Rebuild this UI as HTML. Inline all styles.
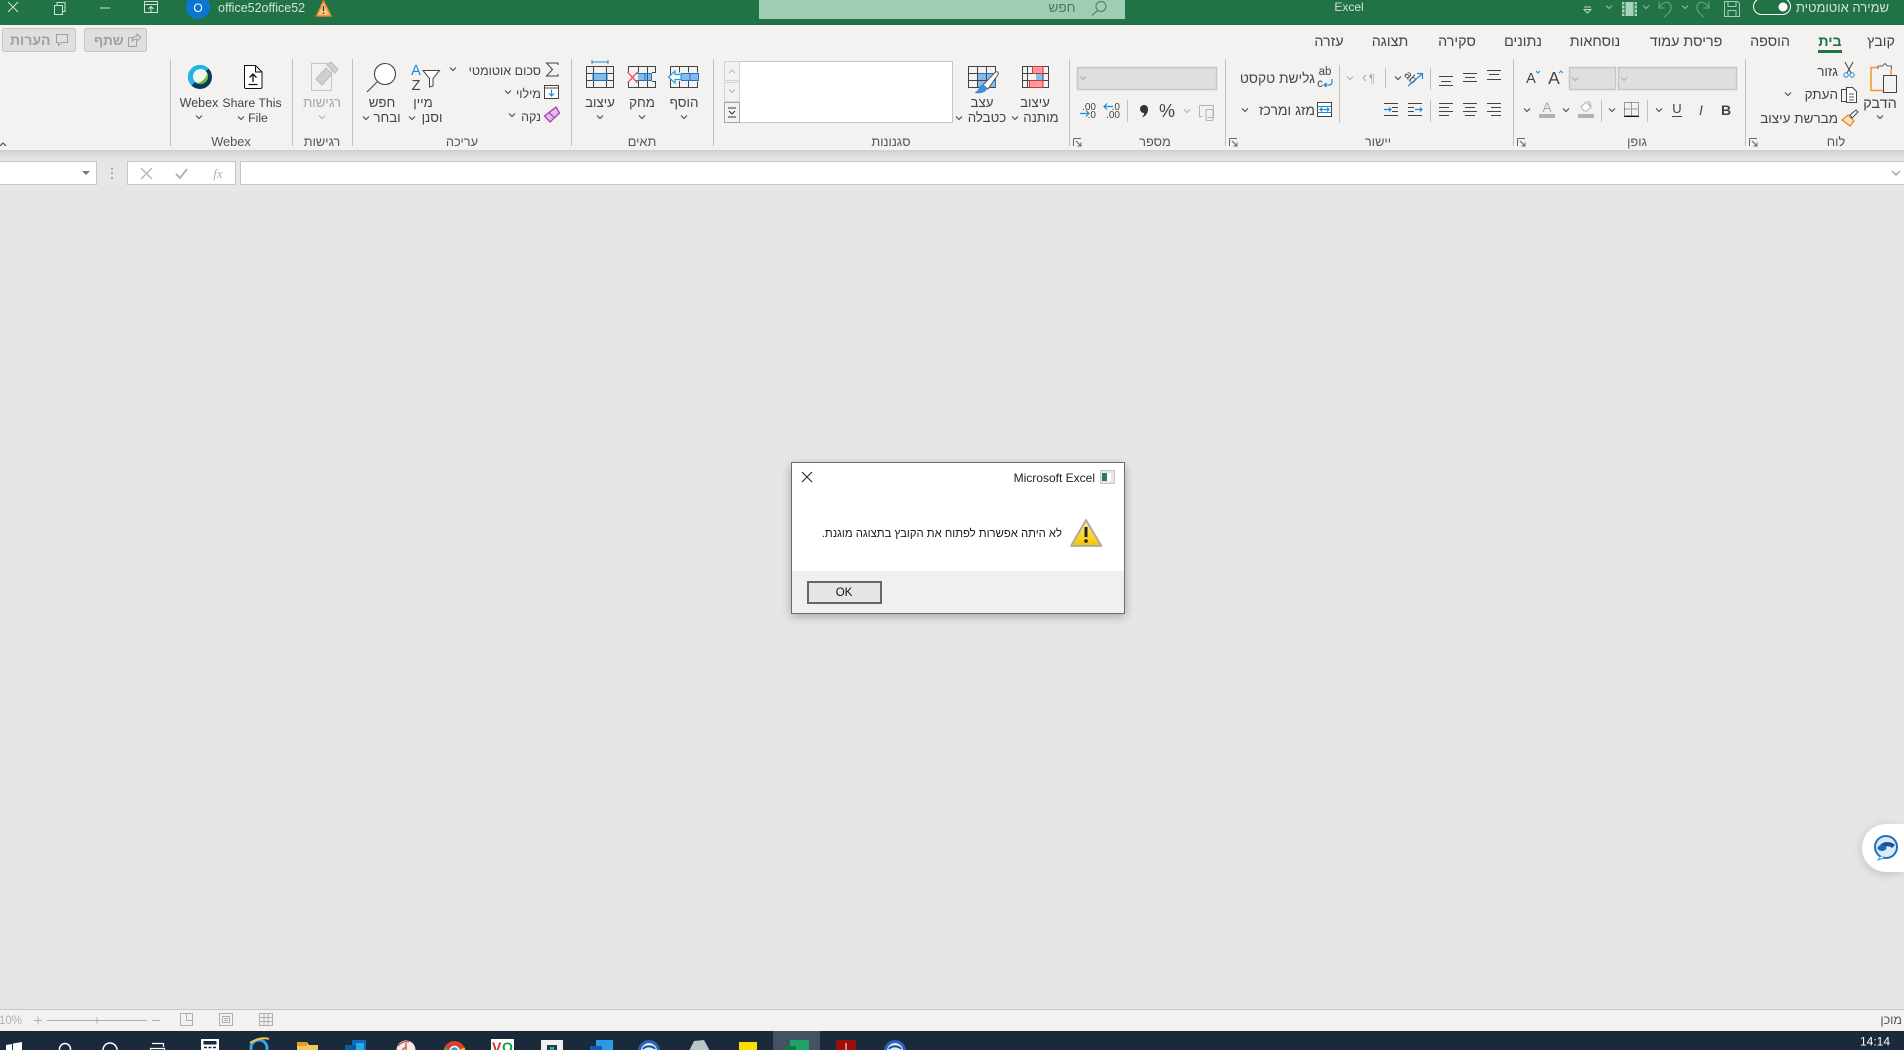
<!DOCTYPE html>
<html lang="he"><head><meta charset="utf-8"><title>Excel</title>
<style>
html,body{margin:0;padding:0;background:#e6e6e6;width:1904px;height:1050px;overflow:hidden}
svg{position:absolute;left:0;top:0;display:block}
text{font-family:"Liberation Sans","Noto Sans CJK SC",sans-serif;font-size:12px;fill:#444}
.h{font-size:13.3px}
.s{font-size:12.5px}
.m{text-anchor:middle}
.e{text-anchor:end}
.tab{font-size:14.300px;text-anchor:middle;fill:#444}
.lab{font-size:12.800px;text-anchor:middle;fill:#555}
.w{fill:#d2e3d9}
.gr{fill:#a8a6a4}
.ln{stroke:#444;stroke-width:1;fill:none}
.bl{stroke:#1f8ad6;stroke-width:1.2;fill:none}
.sep{stroke:#c4c2c0;stroke-width:1}
.cb{fill:#e1dfdd;stroke:#c8c6c4;stroke-width:1.5}
#msg{position:absolute;left:800px;width:262px;top:526px;font:11.3px/16px "Liberation Sans",sans-serif;color:#1a1a1a;text-align:right;direction:rtl;white-space:nowrap}
</style></head><body>
<svg width="1904" height="1050" viewBox="0 0 1904 1050" xmlns="http://www.w3.org/2000/svg">
<defs>
<path id="c" d="M-3-1.500L0 1.500L3-1.500" fill="none" stroke="#444" stroke-width="1"/>
<path id="cg" d="M-3-1.500L0 1.500L3-1.500" fill="none" stroke="#b0aeac" stroke-width="1"/>
<path id="cl" d="M-3-1.500L0 1.500L3-1.500" fill="none" stroke="#8fc0a5" stroke-width="1"/>
<path id="dl" d="M.5.5H8M.5.5V8M3 3L8 8M8 4.500V8H4.500" fill="none" stroke="#666" stroke-width="1"/>
<linearGradient id="sh" x1="0" y1="0" x2="0" y2="1"><stop offset="0" stop-color="#cfcfcf"/><stop offset="1" stop-color="#e6e6e6"/></linearGradient>
<linearGradient id="yw" x1="0" y1="0" x2="0" y2="1"><stop offset="0" stop-color="#fff27a"/><stop offset="1" stop-color="#f5c400"/></linearGradient>
<filter id="ds" x="-20%" y="-40%" width="140%" height="180%"><feGaussianBlur stdDeviation="5"/></filter>
</defs>
<!-- backgrounds -->
<rect width="1904" height="1050" fill="#e6e6e6"/>
<rect width="1904" height="25" fill="#217346"/>
<rect y="25" width="1904" height="125" fill="#f3f2f1"/>
<rect y="150" width="1904" height="9" fill="url(#sh)"/>

<!-- title bar left -->
<path d="M8 2L18 12M18 2L8 12" stroke="#cfe2d7" fill="none"/>
<path d="M54.500 5.500h8v9h-8zM57 5.500V2.500h8v9h-2.500" stroke="#cfe2d7" fill="none"/>
<path d="M100 8h10" stroke="#cfe2d7"/>
<path d="M144.500 1.500h13v11h-13zM144.500 4.500h13M151 12V7M148.500 9L151 6.500L153.500 9" stroke="#cfe2d7" fill="none"/>
<circle cx="198" cy="7" r="12" fill="#0a78d2"/>
<text x="198" y="12" class="m" style="fill:#fff;font-size:12px">O</text>
<text x="218" y="12" class="w" style="font-size:12.500px">office52office52</text>
<path d="M323.500 1L331 16H316.500Z" fill="#f7c57f" stroke="#e8872b" stroke-width="1.500"/><path d="M323.500 6V11M323.500 12.500V14" stroke="#333" stroke-width="1.200"/>

<!-- search -->
<rect x="759" width="366" height="19" fill="#9fcdb3"/>
<text x="1062" y="12" class="m" style="fill:#3f7f5e;font-size:13.500px">חפש</text>
<circle cx="1101" cy="6.500" r="5" fill="none" stroke="#3f7f5e"/><path d="M1097.500 10.500L1092 15.500" stroke="#3f7f5e"/>
<text x="1349" y="11" class="m w" style="font-size:12px">Excel</text>

<!-- QAT -->
<path d="M1584 7h7M1584 9.500L1587.500 13L1591 9.500Z" fill="none" stroke="#bcd6c7"/>
<use href="#cl" x="1609" y="7"/>
<rect x="1622" y="2" width="15" height="14" fill="#a7d3ba"/><path d="M1625 2v14M1634 2v14M1622 5h3M1622 9h3M1622 13h3M1634 5h3M1634 9h3M1634 13h3" stroke="#217346"/>
<use href="#cl" x="1646" y="7"/>
<path d="M1659 1v7h6M1659 8C1664-1 1672 2 1671 8C1671 12 1667 15 1664 17" fill="none" stroke="#5ea17e" stroke-width="1.200"/>
<use href="#cl" x="1685" y="7"/>
<path d="M1709 1v7h-6M1709 8C1704-1 1696 2 1697 8C1697 12 1701 15 1704 17" fill="none" stroke="#5ea17e" stroke-width="1.200"/>
<path d="M1724.500 1.500h13l2 2v13h-15zM1728 1.500v5h8v-5M1728 16.500v-6h8v6" fill="none" stroke="#a4cdb6"/>
<rect x="1753.500" y="-1.500" width="37" height="16" rx="8" fill="#217346" stroke="#fff"/>
<circle cx="1783" cy="7" r="4.500" fill="#fff"/>
<text x="1889" y="12" class="e w" style="font-size:13px">שמירה אוטומטית</text>

<!-- tabs -->
<text x="1881" y="46" class="tab">קובץ</text>
<text x="1830" y="46" class="tab" style="font-weight:bold;fill:#217346">בית</text>
<rect x="1818" y="50" width="24" height="3" fill="#217346"/>
<text x="1770" y="46" class="tab">הוספה</text>
<text x="1686" y="46" class="tab">פריסת עמוד</text>
<text x="1595" y="46" class="tab">נוסחאות</text>
<text x="1523" y="46" class="tab">נתונים</text>
<text x="1457" y="46" class="tab">סקירה</text>
<text x="1390" y="46" class="tab">תצוגה</text>
<text x="1329" y="46" class="tab">עזרה</text>

<!-- share/comments -->
<rect x="2.500" y="28.500" width="73" height="23" rx="2" fill="#e1dfdd" stroke="#c8c6c4"/>
<text x="10" y="45" style="font-weight:bold;fill:#a19f9d;font-size:14px">הערות</text>
<path d="M56.500 34.500h11v8h-6l-3 3v-3h-2z" fill="none" stroke="#a19f9d"/>
<rect x="84.500" y="28.500" width="62" height="23" rx="2" fill="#e1dfdd" stroke="#c8c6c4"/>
<text x="94" y="45" style="font-weight:bold;fill:#a19f9d;font-size:13.500px">שתף</text>
<path d="M128.500 37.500v9h8v-5M128.500 37.500h4M132 41c0-3 2-5 5-5v-2l4 3.500-4 3.500v-2c-2 0-4 1-5 2z" fill="none" stroke="#a19f9d"/>

<!-- separators -->
<path class="sep" d="M170.500 59V146M292.500 59V146M352.500 59V146M571.500 59V146M713.500 59V146M1069.500 59V146M1225.500 59V146M1513.500 59V146M1745.500 59V146"/>
<path d="M0 146L3 143L6 146" fill="none" stroke="#444"/>

<!-- Webex group -->
<circle cx="200" cy="77" r="12" fill="#0b3a52"/>
<path d="M191.500 85.500A12 12 0 0 1 208.500 68.500L204.500 73A6 6 0 0 0 196 81.500Z" fill="#1fb6e8"/>
<circle cx="200.500" cy="76.500" r="7.500" fill="#f4f6f0"/>
<path d="M207.500 73A8 8 0 0 1 196 83C201 83 206 79 207.500 73Z" fill="#66b944"/>
<text x="199" y="107" class="m" style="font-size:12.500px">Webex</text><use href="#c" x="199" y="117"/>
<path d="M244.500 65.500h11l6.500 6.500v15a1.500 1.500 0 0 1-1.500 1.500h-14.500a1.500 1.500 0 0 1-1.500-1.500zM255.500 65.500v6.500h6.500" fill="#fff" stroke="#111" stroke-width="1"/>
<path d="M253 82V74M249.500 77.500L253 74L256.500 77.500M248.500 84.500h9" fill="none" stroke="#111" stroke-width="1.300"/>
<text x="252" y="107" class="m" style="font-size:12.300px">Share This</text><text x="258" y="122" class="m" style="font-size:12.300px">File</text><use href="#c" x="241" y="118"/>
<text x="231" y="146" class="lab">Webex</text>

<!-- Sensitivity -->
<rect x="311.500" y="63.500" width="20" height="27" fill="none" stroke="#c8c6c4"/>
<path d="M316 79l10-11 6 6-10 11zM327 65l4-3 7 7-3 4z" fill="#d2d0ce" stroke="#bdbbb9"/>
<text x="322" y="107" class="m gr h">רגישות</text><use href="#cg" x="322" y="117"/>
<text x="322" y="146" class="lab">רגישות</text>

<!-- Editing -->
<circle cx="385" cy="74" r="10.500" fill="#fff" stroke="#444" stroke-width="1.100"/>
<path d="M377 82L367 92" stroke="#444" stroke-width="1.100"/>
<text x="382" y="107" class="m h">חפש</text><text x="387" y="122" class="m h">ובחר</text><use href="#c" x="366" y="118"/>
<text x="416" y="75" class="m" style="fill:#1f8ad6;font-size:14.500px">A</text>
<text x="416" y="90" class="m" style="fill:#444;font-size:14.500px">Z</text>
<path d="M423 70.500h16.500l-6.500 8v7.500l-3.500 1v-8.500z" fill="#fff" stroke="#444"/>
<text x="423" y="107" class="m h">מיין</text><text x="432" y="122" class="m h">וסנן</text><use href="#c" x="412" y="118"/>
<text x="541" y="75" class="e s">סכום אוטומטי</text><use href="#c" x="453" y="69"/>
<path d="M558 65V63H546.500L552.500 69.500L546.500 76H558V74" fill="none" stroke="#444"/>
<text x="541" y="98" class="e s">מילוי</text><use href="#c" x="508" y="92"/>
<rect x="544.500" y="85.500" width="14" height="13" fill="#fff" stroke="#444"/><path d="M544.500 88h14" stroke="#444"/><path d="M551.500 89.500v6.500M549 93.500L551.500 96L554 93.500" fill="none" stroke="#1f8ad6" stroke-width="1.200"/>
<text x="541" y="121" class="e s">נקה</text><use href="#c" x="512" y="115"/>
<path d="M544.500 116L556 107L559.500 113L550 122Z" fill="#e3b8ea" stroke="#9c37b0" stroke-width="1.200"/><path d="M549 112.500L554.500 118" stroke="#9c37b0"/>
<text x="462" y="146" class="lab">עריכה</text>

<!-- Cells -->
<path d="M592 62h16M592 60v4M608 60v4" stroke="#1f8ad6" fill="none"/>
<rect x="593" y="73" width="14" height="8" fill="#83bcec"/>
<path d="M586.500 66.500h27v21h-27zM593.500 66.500v21M606.500 66.500v21M586.500 73.500h27M586.500 80.500h27" fill="none" stroke="#444"/>
<path d="M593 73.500h14v7h-14z" fill="none" stroke="#1e75c4"/>
<text x="600" y="107" class="m h">עיצוב</text><use href="#c" x="600" y="117"/>
<rect x="638" y="73" width="14" height="8" fill="#83bcec"/>
<path d="M628.500 72V66.500H655.500V72.500H652M628.500 82V87.500H655.500V81.500H652M638.500 66.500v6M647.500 66.500v21M638.500 81v6" fill="none" stroke="#444"/>
<path d="M636 73.500H651.500V80.500H636M645 73.500v7" fill="none" stroke="#1e75c4"/>
<path d="M627.500 72L637.500 83M637.500 72L627.500 83" stroke="#ec4b4f" stroke-width="1.300"/>
<text x="642" y="107" class="m h">מחק</text><use href="#c" x="642" y="117"/>
<rect x="681" y="73" width="18" height="8" fill="#83bcec"/>
<path d="M670.500 66.500h27v6M670.500 66.500v21h27v-6M679.500 66.500v6M688.500 66.500v6M679.500 81v6M688.500 81v6M670.500 73v8" fill="none" stroke="#444"/>
<path d="M681 73.500h17.500v7H681M690 73.500v7" fill="none" stroke="#1e75c4"/>
<path d="M668.500 77L675 71v3.500h6v5h-6V83Z" fill="#fff" stroke="#2b9ae6" stroke-width="1.200"/>
<text x="684" y="107" class="m h">הוסף</text><use href="#c" x="684" y="117"/>
<text x="642" y="146" class="lab">תאים</text>

<!-- Style gallery -->
<rect x="739.500" y="61.500" width="213" height="61" fill="#fff" stroke="#c8c6c4"/>
<rect x="724.500" y="61.500" width="15" height="19" fill="#f3f2f1" stroke="#d6d4d2"/>
<rect x="724.500" y="82.500" width="15" height="19" fill="#f3f2f1" stroke="#d6d4d2"/>
<rect x="724.500" y="102.500" width="15" height="20" fill="#f3f2f1" stroke="#a8a6a4"/>
<path d="M729 73L732 70L735 73" fill="none" stroke="#b5b3b1"/><use href="#cg" x="732" y="91"/>
<path d="M728 108h8M729 111L732 114L735 111M728 117h8" fill="none" stroke="#333"/>

<!-- Format as table -->
<rect x="978" y="74" width="18" height="13" fill="#83bcec"/>
<path d="M968.500 66.500h27v21h-27zM977.500 66.500v21M986.500 66.500v21M968.500 73.500h27M968.500 80.500h27" fill="none" stroke="#444"/>
<path d="M978 73.500h17.500v14" fill="none" stroke="#1e75c4"/>
<path d="M983 85L995 72.500c2-1.500 4-.5 3 2L988 89Z" fill="#fff" stroke="#555"/>
<path d="M975 93c4 1 10 0 12-4 0-2-2-4-5-4-3 .5-3 3-4 5-1 1-3 2-3 3z" fill="#3d8ed6"/>
<text x="982" y="107" class="m h">עצב</text><text x="987" y="122" class="m h">כטבלה</text><use href="#c" x="959" y="118"/>

<!-- Conditional -->
<rect x="1032" y="66" width="11" height="7" fill="#ff9a9f"/><rect x="1029" y="80" width="14" height="7" fill="#ff9a9f"/><rect x="1036" y="73" width="7" height="7" fill="#83bcec"/>
<path d="M1022.500 66.500h26v21h-26zM1027.500 66.500v21M1043 66.500v21M1022.500 73.500h26M1022.500 80.500h26" fill="none" stroke="#444"/>
<path d="M1032.500 66.500h10.500v7h-10.500zM1029.500 80.500h13.500v7h-13.500z" fill="none" stroke="#d9322f"/>
<text x="1035" y="107" class="m h">עיצוב</text><text x="1041" y="122" class="m h">מותנה</text><use href="#c" x="1015" y="118"/>
<text x="891" y="146" class="lab">סגנונות</text>

<!-- Number -->
<rect class="cb" x="1077.500" y="67.500" width="139" height="22"/><use href="#cg" x="1083" y="78"/>
<text x="1096" y="110" class="e" style="font-size:10px">.00</text><text x="1096" y="118" class="e" style="font-size:10px">.0</text><path d="M1080 113.500h9M1086 110.500l3 3-3 3" fill="none" stroke="#1f8ad6" stroke-width="1.200"/>
<text x="1120" y="110" class="e" style="font-size:10px">.0</text><text x="1120" y="118" class="e" style="font-size:10px">.00</text><path d="M1104 106.500h9M1107 103.500l-3 3 3 3" fill="none" stroke="#1f8ad6" stroke-width="1.200"/>
<path class="sep" d="M1127.500 100v22"/>
<circle cx="1144" cy="109" r="4" fill="#333"/><path d="M1148 109c0 4-2 7-6 8.500c1.500-2 2.500-4 2.500-6z" fill="#333"/>
<text x="1167" y="117" class="m" style="font-size:18px">%</text>
<use href="#cg" x="1187" y="111"/>
<path d="M1199.500 105.500h14v12h-6M1199.500 105.500v11h3" fill="none" stroke="#b5b3b1"/><rect x="1206" y="109.500" width="7" height="11" rx="1.500" fill="none" stroke="#b5b3b1"/>
<use href="#dl" x="1073" y="138"/>
<text x="1155" y="146" class="lab">מספר</text>

<!-- Alignment -->
<path class="ln" d="M1487 70.500h14M1489 74.500h10M1487 79.500h14M1463 73.500h14M1465 77.500h10M1463 81.500h14M1439 76.500h14M1441 81.500h10M1439 85.500h14"/>
<path class="ln" d="M1487 103.500h14M1491 107.500h10M1487 111.500h14M1491 115.500h10M1463 103.500h14M1465 107.500h10M1463 111.500h14M1465 115.500h10M1439 103.500h14M1439 107.500h10M1439 111.500h14M1439 115.500h10"/>
<path class="sep" d="M1430.500 68v22M1430.500 100v22M1385.500 68v20M1339.500 65v58"/>
<text x="1411" y="81" style="font-size:11.500px" transform="rotate(45 1411 77)" class="m">ab</text>
<path class="bl" d="M1408 86L1422 74M1417 73.500h5.500v5.500"/>
<use href="#c" x="1398" y="78"/>
<text x="1372" y="82" class="m gr" style="font-size:11px">¶</text><path d="M1366 75l-3 3 3 3" fill="none" stroke="#b0aeac"/>
<use href="#cg" x="1350" y="78"/>
<text x="1315" y="83" class="e" style="font-size:13.800px">גלישת טקסט</text>
<text x="1325" y="75" class="m" style="font-size:11.500px">ab</text><text x="1320" y="87" class="m" style="font-size:11.500px">c</text><path class="bl" d="M1332 79v3c0 2-1 3-3 3h-5M1326.500 83l-2.500 2 2.500 2"/>
<text x="1315" y="115" class="e" style="font-size:14px">מזג ומרכז</text><use href="#c" x="1245" y="110"/>
<rect x="1317.500" y="102.500" width="14" height="14" fill="#fff" stroke="#444"/>
<path d="M1317.500 106.500h14M1317.500 112.500h14" stroke="#1f8ad6"/><path class="bl" d="M1320 109.500h9M1322 107.500l-2 2 2 2M1327 107.500l2 2-2 2"/>
<path class="ln" d="M1408 103.500h14M1408 107.500h6M1408 111.500h6M1408 115.500h14"/><path class="bl" d="M1415 109.500h7M1420 107.500l2 2-2 2"/>
<path class="ln" d="M1384 103.500h14M1392 107.500h6M1392 111.500h6M1384 115.500h14"/><path class="bl" d="M1384 109.500h7M1389 107.500l2 2-2 2"/>
<use href="#dl" x="1229" y="138"/>
<text x="1378" y="146" class="lab">יישור</text>

<!-- Font -->
<text x="1531" y="83" class="m" style="font-size:14.500px">A</text><path d="M1536 71l2 2 2-2" fill="none" stroke="#1f8ad6"/>
<text x="1554" y="84" class="m" style="font-size:17.500px">A</text><path d="M1559 73l2-2 2 2" fill="none" stroke="#1f8ad6"/>
<rect class="cb" x="1569.500" y="67.500" width="46" height="22"/><use href="#cg" x="1575" y="79"/>
<rect class="cb" x="1618.500" y="67.500" width="118" height="22"/><use href="#cg" x="1624" y="79"/>
<use href="#c" x="1527" y="110"/>
<text x="1547" y="112" class="m gr" style="font-size:13.500px">A</text><rect x="1539" y="114" width="16" height="4" fill="#b3b1af"/>
<use href="#c" x="1566" y="110"/>
<path d="M1581 107l5-5 5 5-4 4h-3z" fill="#fff" stroke="#b3b1af"/><path d="M1588 101c2 1 3 4 3 6" fill="none" stroke="#b3b1af"/><rect x="1578" y="114" width="16" height="4" fill="#b3b1af"/>
<path class="sep" d="M1601.500 100v22M1647.500 100v22"/>
<use href="#c" x="1612" y="110"/>
<path d="M1624.500 102.500h14v13h-14zM1631.500 102.500v13M1624.500 109h14" fill="none" stroke="#444" stroke-dasharray="1 1"/><path d="M1624 116.500h15" stroke="#111"/>
<use href="#c" x="1659" y="110"/>
<text x="1677" y="113" class="m" style="font-size:13px">U</text><path d="M1672 116.500h10" stroke="#444"/>
<text x="1701" y="115" class="m" style="font-size:14px;font-style:italic">I</text>
<text x="1726" y="115" class="m" style="font-size:14px;font-weight:bold">B</text>
<use href="#dl" x="1517" y="138"/>
<text x="1637" y="146" class="lab">גופן</text>

<!-- Clipboard -->
<rect x="1871" y="67.500" width="20" height="23" fill="#f3f2f1" stroke="#ef9b23" stroke-width="1.500"/>
<path d="M1878 69v-3h4.500l2.500-2.500 2.500 2.500h4v3" fill="#f3f2f1" stroke="#666"/>
<rect x="1883.500" y="75.500" width="13" height="17" fill="#f3f2f1" stroke="#444"/>
<text x="1880" y="108" class="m" style="font-size:14.500px">הדבק</text><use href="#c" x="1880" y="117"/>
<text x="1838" y="76" class="e" style="font-size:13.500px">גזור</text>
<path d="M1845 62l6 11M1853 62l-6 11" fill="none" stroke="#444"/><circle cx="1846" cy="75" r="2.200" fill="none" stroke="#1f8ad6"/><circle cx="1852" cy="75" r="2.200" fill="none" stroke="#1f8ad6"/>
<text x="1838" y="99" class="e" style="font-size:13.500px">העתק</text><use href="#c" x="1788" y="94"/>
<path d="M1841.500 89.500h5v12h-5z" fill="none" stroke="#444"/><path d="M1846.500 87.500h6l4 4v11h-10z" fill="#fff" stroke="#444"/><path d="M1849 94h5M1849 97h5M1849 100h5" stroke="#555"/>
<text x="1838" y="123" class="e" style="font-size:13.500px">מברשת עיצוב</text>
<path d="M1842 120l6-5 6 6-4 5z" fill="#fbe2b7" stroke="#e6831f" stroke-width="1.200"/><path d="M1850 115l6-5 2 2-6 6z" fill="#fff" stroke="#444"/>
<use href="#dl" x="1749" y="138"/>
<text x="1836" y="146" class="lab">לוח</text>

<!-- Formula bar -->
<rect x="-2" y="161.500" width="98.500" height="23" fill="#fff" stroke="#c8c6c4"/>
<path d="M82 171h8l-4 4z" fill="#777"/>
<path d="M112 168v1.500M112 172.500v1.500M112 177v1.500" stroke="#999" stroke-width="2"/>
<rect x="127.500" y="161.500" width="108" height="23" fill="#fff" stroke="#c8c6c4"/>
<path d="M141 168L152 179M152 168L141 179" stroke="#b5b3b1" stroke-width="1.300"/>
<path d="M176 174l4 4 7-9" fill="none" stroke="#b5b3b1" stroke-width="2"/>
<text x="218" y="178" class="m" style="font-family:'Liberation Serif',serif;font-style:italic;font-size:13px;fill:#b0aeac">fx</text>
<rect x="240.500" y="161.500" width="1670" height="23" fill="#fff" stroke="#c8c6c4"/>
<path d="M1892 171l4 4 4-4" fill="none" stroke="#a6a6a6" stroke-width="1.500"/>

<!-- Chat bubble -->
<rect x="1862" y="826" width="50" height="48" rx="24" fill="#000" opacity=".18" filter="url(#ds)"/>
<path d="M1904 824H1886a24 24 0 0 0 0 48H1904Z" fill="#fff"/>
<circle cx="1886" cy="847" r="11" fill="#dce9f6" stroke="#1f6fc0" stroke-width="2"/>
<path d="M1878 849c2-8 12-9 17-4l-3 3c-3-3-8-2-9 2z" fill="#1c4f9c"/><ellipse cx="1882" cy="848" rx="4.500" ry="3" fill="#1e6bbd"/>
<path d="M1881 856l-3 4 6-2" fill="#fff" stroke="#22a3dd"/>

<!-- Dialog -->
<rect x="791" y="466" width="334" height="150" fill="#000" opacity=".3" filter="url(#ds)"/>
<rect x="791.500" y="462.500" width="333" height="151" fill="#fff" stroke="#6d6d6d"/>
<rect x="792" y="571" width="332" height="42" fill="#f0f0f0"/>
<path d="M802 472L812 482M812 472L802 482" stroke="#222" fill="none"/>
<text x="1095" y="482" class="e" style="fill:#222;font-size:12px">Microsoft Excel</text>
<rect x="1100.500" y="470.500" width="14" height="13" fill="#e7e7e7" stroke="#c7c7c7"/><rect x="1102" y="473" width="5" height="8" fill="#2b7a6a"/><rect x="1107" y="473" width="4" height="8" fill="#fff"/>
<path d="M1086 520L1101.500 546H1071Z" fill="url(#yw)" stroke="#a9a9a9" stroke-width="1.800" stroke-linejoin="round"/>
<path d="M1086 527v10" stroke="#222" stroke-width="3"/><circle cx="1086" cy="541" r="1.800" fill="#222"/>
<rect x="808" y="582" width="73" height="21" fill="#e6e6e6" stroke="#666" stroke-width="2"/>
<text x="844" y="596" class="m" style="fill:#111;font-size:11.500px">OK</text>

<!-- status bar -->
<rect y="1009" width="1904" height="1" fill="#c8c6c4"/>
<rect y="1010" width="1904" height="21" fill="#f3f2f1"/>
<text x="-1" y="1024" style="font-size:11.500px;fill:#b0aeac">10%</text>
<path d="M34 1020.500h8M38 1016.500v8M47 1020.500h100M97 1017.500v6M152 1020.500h8" stroke="#b0aeac" fill="none"/>
<path d="M180.500 1013.500h12v12h-12zM186.500 1013.500v7h6" fill="none" stroke="#b0aeac"/>
<path d="M219.500 1013.500h13v12h-13zM222.500 1016.500h7v6h-7zM224 1018.500h4M224 1020.500h4" fill="none" stroke="#b0aeac"/>
<path d="M259.500 1013.500h13v12h-13zM259.500 1017.500h13M259.500 1021.500h13M264 1013.500v12M268 1013.500v12" fill="none" stroke="#b0aeac"/>
<text x="1902" y="1024" class="e" style="font-size:12.500px;fill:#555">מוכן</text>

<!-- taskbar -->
<rect y="1031" width="1904" height="19" fill="#1a2a3b"/>
<rect x="773" y="1031" width="47" height="19" fill="#455260"/>
<path d="M6 1045l6-1v6H6zM13 1043.500l9-1.500v8h-9z" fill="#fff"/>
<circle cx="65" cy="1049" r="5.500" fill="none" stroke="#fff" stroke-width="1.500"/>
<circle cx="110" cy="1050" r="7" fill="none" stroke="#fff" stroke-width="1.500"/>
<path d="M152 1043.500h11M163.500 1043v4M150.500 1048.500h14v4h-14z" fill="none" stroke="#fff" stroke-width="1.200"/>
<rect x="201" y="1039" width="18" height="12" fill="#fff"/><rect x="203.500" y="1041" width="13" height="3.500" fill="#1a2a3b"/><path d="M204 1047.500h3M208.500 1047.500h3M213 1047.500h3" stroke="#1a2a3b" stroke-width="1.500"/>
<circle cx="259" cy="1048" r="8" fill="none" stroke="#35a4e8" stroke-width="3"/><path d="M250 1043c6-4 14-6 19-4" fill="none" stroke="#f4c24b" stroke-width="2"/>
<path d="M297 1042h10l2 3h9v6h-21z" fill="#f3c860"/><rect x="297" y="1042" width="10" height="4" fill="#e39c27"/>
<rect x="352" y="1040" width="14" height="11" fill="#0f6cbd"/><rect x="345" y="1045" width="11" height="6" fill="#0a5aa8"/><rect x="356" y="1043" width="8" height="8" fill="#28a8ea"/>
<circle cx="406" cy="1050" r="9.500" fill="#f4e9e6"/><path d="M398 1046c3-4 8-5 11-4M406 1043v7M402 1050l4-3" fill="none" stroke="#c94f4f" stroke-width="1.300"/>
<circle cx="454.500" cy="1052" r="11" fill="#d8432f"/>
<path d="M454.500 1052L444.500 1047.500A11 11 0 0 0 454.500 1063Z" fill="#46a84d"/>
<path d="M454.500 1052L464.500 1047.500A11 11 0 0 1 454.500 1063Z" fill="#f5c518"/>
<circle cx="454.500" cy="1051" r="4.500" fill="#4c8bf5" stroke="#fff" stroke-width="1.500"/>
<rect x="491" y="1039" width="23" height="12" fill="#fff"/><text x="492" y="1052" style="font-size:14px;font-weight:bold;fill:#d92727">V</text><text x="502" y="1052" style="font-size:14px;font-weight:bold;fill:#0d9b46">O</text>
<rect x="541" y="1040" width="22" height="11" fill="#f1f1f1"/><rect x="547" y="1045" width="10" height="6" fill="#1f3f4f"/><rect x="550" y="1047" width="4" height="3" fill="#3fae7a"/>
<rect x="596" y="1040" width="17" height="11" fill="#2b9be8"/><rect x="590" y="1046" width="12" height="5" fill="#155bb5"/>
<circle cx="649" cy="1051" r="9.500" fill="#dfeaf7" stroke="#2a65b8" stroke-width="3"/><path d="M643 1049c3-4 10-3 12 0" fill="none" stroke="#1e4f9c" stroke-width="2"/>
<path d="M689 1051l5-10 10-1 6 11z" fill="#b9c7c7"/>
<rect x="739" y="1042" width="18" height="9" fill="#ffdf00"/>
<rect x="790" y="1040" width="19" height="11" fill="#21a366"/><rect x="785" y="1046" width="11" height="5" fill="#107c41"/>
<rect x="836" y="1040" width="20" height="11" rx="2" fill="#a10d0d"/><path d="M846 1043v7" stroke="#f3d0d0" stroke-width="1.200"/>
<circle cx="895" cy="1051" r="9.500" fill="#dfeaf7" stroke="#2a65b8" stroke-width="3"/><path d="M889 1049c3-4 10-3 12 0" fill="none" stroke="#1e4f9c" stroke-width="2"/>
<text x="1875" y="1045.500" class="m" style="fill:#fff;font-size:12px">14:14</text>
</svg>
<div id="msg">לא היתה אפשרות לפתוח את הקובץ בתצוגה מוגנת.</div>
</body></html>
